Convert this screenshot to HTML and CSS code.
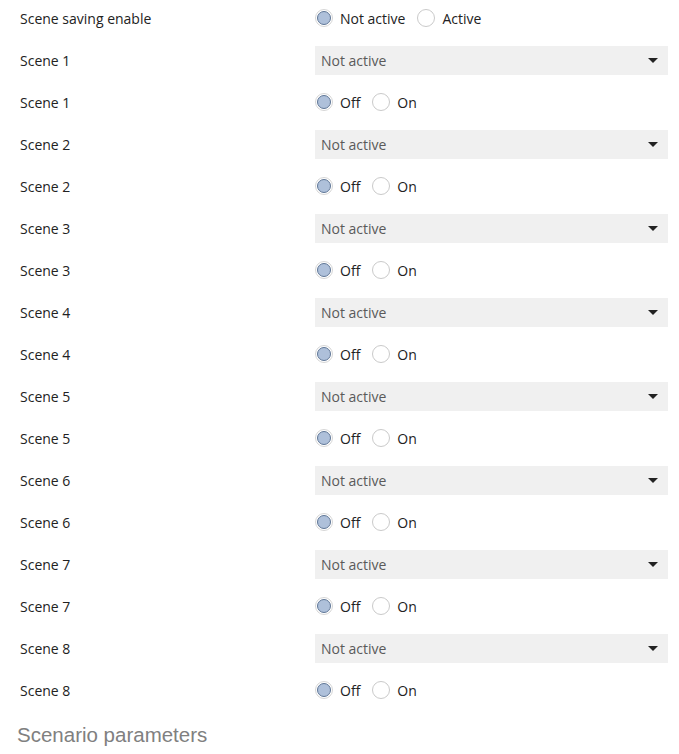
FILE: index.html
```html
<!DOCTYPE html>
<html>
<head>
<meta charset="utf-8">
<link rel="stylesheet" href="styles.css">
</head>
<body>
<div class="form">
  <div class="row"><div class="label">Scene saving enable</div><div class="ctl"><span class="radio on"></span><span class="opt">Not active</span><span class="radio"></span><span class="opt">Active</span></div></div>
  <div class="row"><div class="label">Scene 1</div><div class="ctl"><div class="select"><span>Not active</span><span class="arrow"></span></div></div></div>
  <div class="row"><div class="label">Scene 1</div><div class="ctl"><span class="radio on"></span><span class="opt">Off</span><span class="radio"></span><span class="opt">On</span></div></div>
  <div class="row"><div class="label">Scene 2</div><div class="ctl"><div class="select"><span>Not active</span><span class="arrow"></span></div></div></div>
  <div class="row"><div class="label">Scene 2</div><div class="ctl"><span class="radio on"></span><span class="opt">Off</span><span class="radio"></span><span class="opt">On</span></div></div>
  <div class="row"><div class="label">Scene 3</div><div class="ctl"><div class="select"><span>Not active</span><span class="arrow"></span></div></div></div>
  <div class="row"><div class="label">Scene 3</div><div class="ctl"><span class="radio on"></span><span class="opt">Off</span><span class="radio"></span><span class="opt">On</span></div></div>
  <div class="row"><div class="label">Scene 4</div><div class="ctl"><div class="select"><span>Not active</span><span class="arrow"></span></div></div></div>
  <div class="row"><div class="label">Scene 4</div><div class="ctl"><span class="radio on"></span><span class="opt">Off</span><span class="radio"></span><span class="opt">On</span></div></div>
  <div class="row"><div class="label">Scene 5</div><div class="ctl"><div class="select"><span>Not active</span><span class="arrow"></span></div></div></div>
  <div class="row"><div class="label">Scene 5</div><div class="ctl"><span class="radio on"></span><span class="opt">Off</span><span class="radio"></span><span class="opt">On</span></div></div>
  <div class="row"><div class="label">Scene 6</div><div class="ctl"><div class="select"><span>Not active</span><span class="arrow"></span></div></div></div>
  <div class="row"><div class="label">Scene 6</div><div class="ctl"><span class="radio on"></span><span class="opt">Off</span><span class="radio"></span><span class="opt">On</span></div></div>
  <div class="row"><div class="label">Scene 7</div><div class="ctl"><div class="select"><span>Not active</span><span class="arrow"></span></div></div></div>
  <div class="row"><div class="label">Scene 7</div><div class="ctl"><span class="radio on"></span><span class="opt">Off</span><span class="radio"></span><span class="opt">On</span></div></div>
  <div class="row"><div class="label">Scene 8</div><div class="ctl"><div class="select"><span>Not active</span><span class="arrow"></span></div></div></div>
  <div class="row"><div class="label">Scene 8</div><div class="ctl"><span class="radio on"></span><span class="opt">Off</span><span class="radio"></span><span class="opt">On</span></div></div>
</div>
<p class="caption">Scenario parameters</p>
</body>
</html>
```
FILE: styles.css
```css
html, body { margin: 0; padding: 0; background: #fff; }
body {
  font-family: "Open Sans", "Noto Sans", sans-serif;
  font-size: 14px;
  color: #222;
}
.form { margin-top: -3px; }
.row {
  display: flex;
  align-items: center;
  height: 42px;
}
.label {
  width: 295px;
  padding-left: 20px;
  flex: none;
}
.ctl {
  flex: 1;
  display: flex;
  align-items: center;
  padding-right: 11px;
}
.select {
  flex: 1;
  height: 29px;
  background: #f0f0f0;
  display: flex;
  align-items: center;
  justify-content: space-between;
  padding: 0 10px 0 6px;
  color: #5a5a5a;
}
.arrow {
  width: 0; height: 0;
  border-left: 5px solid transparent;
  border-right: 5px solid transparent;
  border-top: 5px solid #222;
}
.radio {
  width: 18px; height: 18px;
  border-radius: 50%;
  border: 1px solid #cacaca;
  box-sizing: border-box;
  background: #fff;
  flex: none;
  position: relative;
}
.radio.on {
  border-color: #d6d6d6;
}
.radio.on::after {
  content: "";
  position: absolute;
  left: 1px; top: 1px; right: 1px; bottom: 1px;
  border-radius: 50%;
  border: 1.5px solid #5f7696;
  background: #aec0da;
  box-sizing: border-box;
}
.opt {
  margin-left: 7px;
  margin-right: 12px;
}
.caption {
  margin: 12px 0 0 17px;
  font-family: "Liberation Sans", Arial, sans-serif;
  font-size: 20.5px;
  color: #808080;
}
```
